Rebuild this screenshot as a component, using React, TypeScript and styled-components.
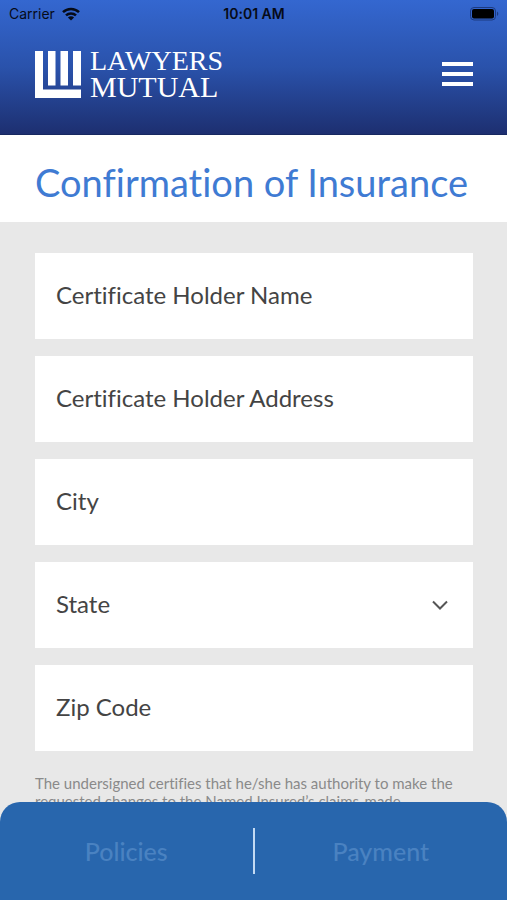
import React from "react";
import styled, { createGlobalStyle } from "styled-components";

const GlobalStyle = createGlobalStyle`
  *, *::before, *::after { box-sizing: border-box; }
  body {
    margin: 0;
    font-family: Lato, "Open Sans", sans-serif;
    font-variant-ligatures: none;
  }
`;

const Screen = styled.div`
  display: flex;
  flex-direction: column;
  height: 100vh;
  overflow: hidden;
  background: #e8e8e8;
`;

const Header = styled.header`
  flex: none;
  background: linear-gradient(#3467d0, #2a52ab 50%, #1d2f70);
  border-bottom: 1px solid #172860;
`;

const StatusBar = styled.div`
  display: grid;
  grid-template-columns: 1fr auto 1fr;
  align-items: center;
  height: 27px;
  padding: 0 8px 0 9px;
  color: #060b18;
  font-family: Inter, sans-serif;
  font-size: 14px;
`;

const Carrier = styled.div`
  display: flex;
  align-items: center;
  gap: 7px;
`;

const Clock = styled.time`
  font-weight: 600;
`;

const Battery = styled.svg`
  justify-self: end;
`;

const Bar = styled.div`
  display: flex;
  align-items: center;
  justify-content: space-between;
  padding: 21px 34px 34px 35px;
`;

const Brand = styled.a`
  display: flex;
  align-items: center;
  gap: 9px;
  color: #fff;
  text-decoration: none;
`;

const BrandName = styled.span`
  display: flex;
  flex-direction: column;
  font-family: "Liberation Serif", serif;
  line-height: 26px;
`;

const BrandWord = styled.span<{ $size: number }>`
  font-size: ${(p) => p.$size}px;
`;

const MenuButton = styled.button`
  display: flex;
  padding: 0;
  border: 0;
  background: none;
  color: #fff;
  cursor: pointer;
`;

const TitleBand = styled.div`
  flex: none;
  padding: 23px 35px 16px;
  background: #fff;
`;

const Title = styled.h1`
  margin: 0;
  color: #3f7bd3;
  font-size: 38px;
  font-weight: 400;
  line-height: 48px;
  white-space: nowrap;
`;

const Content = styled.main`
  flex: 1;
  min-height: 0;
  overflow-y: auto;
  scrollbar-width: none;
  padding: 31px 34px 98px 35px;
`;

const Form = styled.form`
  display: flex;
  flex-direction: column;
  gap: 17px;
`;

const fieldStyle = `
  display: block;
  width: 100%;
  height: 86px;
  margin: 0;
  padding: 0 21px 4px;
  border: 0;
  border-radius: 0;
  background: #fff;
  color: #444;
  font: 400 24px Lato, "Open Sans", sans-serif;
  font-variant-ligatures: none;
  appearance: none;
`;

const TextField = styled.input`
  ${fieldStyle}
  &::placeholder { color: #444; opacity: 1; }
`;

const SelectWrap = styled.div`
  display: grid;
  align-items: center;
  & > * { grid-area: 1 / 1; }
`;

const SelectField = styled.select`
  ${fieldStyle}
`;

const Chevron = styled.svg`
  justify-self: end;
  margin-right: 25px;
  pointer-events: none;
`;

const Terms = styled.p`
  margin: 23px 0 0;
  color: #8a8a8a;
  font-size: 15px;
  line-height: 18px;
`;

const BottomNav = styled.nav`
  position: fixed;
  left: 0;
  right: 0;
  bottom: 0;
  display: grid;
  grid-template-columns: 1fr 2px 1fr;
  align-items: center;
  height: 98px;
  border-radius: 20px 20px 0 0;
  background: #2866ad;
`;

const NavLink = styled.a`
  color: #4a82c1;
  font-size: 25px;
  font-weight: 500;
  line-height: 32px;
  text-align: center;
  text-decoration: none;
`;

const NavDivider = styled.span`
  height: 46px;
  background: #c3daf3;
`;

function WifiIcon() {
  return (
    <svg width="18" height="14" viewBox="0 0 18 14" fill="none" stroke="currentColor" strokeWidth="2.5" aria-hidden="true">
      <path d="M1 5.2a11.4 11.4 0 0 1 16 0" />
      <path d="M4 8.4a7.2 7.2 0 0 1 10 0" />
      <path d="M9 13.6 5.9 10.5a4.4 4.4 0 0 1 6.2 0z" fill="currentColor" stroke="none" />
    </svg>
  );
}

function BatteryIcon() {
  return (
    <Battery width="29" height="14" viewBox="0 0 29 14" aria-label="Battery full" role="img">
      <rect x="0.5" y="0.5" width="25" height="12.5" rx="3.5" fill="none" stroke="#1c3a80" />
      <rect x="2" y="2" width="22" height="9.5" rx="2" fill="#000" />
      <path d="M27 4.5c1.8.8 1.8 3.7 0 4.5z" fill="#1c3a80" />
    </Battery>
  );
}

function LogoMark() {
  return (
    <svg width="46" height="47" viewBox="0 0 46 47" fill="#fff" aria-hidden="true">
      <path d="M0 0h8v38.5h38V47H0z" />
      <path d="M13 0h7.500v34.500H13zM25.500 0h7.500v34.500h-7.500zM38 0h8v34.500h-8z" />
    </svg>
  );
}

export default function App() {
  return (
    <Screen>
      <GlobalStyle />
      <Header>
        <StatusBar>
          <Carrier>
            Carrier
            <WifiIcon />
          </Carrier>
          <Clock>10:01 AM</Clock>
          <BatteryIcon />
        </StatusBar>
        <Bar>
          <Brand href="#home">
            <LogoMark />
            <BrandName>
              <BrandWord $size={28}>LAWYERS</BrandWord>
              <BrandWord $size={30}>MUTUAL</BrandWord>
            </BrandName>
          </Brand>
          <MenuButton type="button" aria-label="Menu">
            <svg width="31" height="24" viewBox="0 0 31 24" fill="currentColor" aria-hidden="true">
              <path d="M0 0h31v4H0zM0 10h31v4H0zM0 20h31v4H0z" />
            </svg>
          </MenuButton>
        </Bar>
      </Header>
      <TitleBand>
        <Title>Confirmation of Insurance</Title>
      </TitleBand>
      <Content>
        <Form>
          <TextField type="text" placeholder="Certificate Holder Name" aria-label="Certificate Holder Name" />
          <TextField type="text" placeholder="Certificate Holder Address" aria-label="Certificate Holder Address" />
          <TextField type="text" placeholder="City" aria-label="City" />
          <SelectWrap>
            <SelectField aria-label="State" defaultValue="">
              <option value="">State</option>
            </SelectField>
            <Chevron width="16" height="10" viewBox="0 0 16 10" fill="none" stroke="#555" strokeWidth="2" aria-hidden="true">
              <path d="M1 1.5 8 8.5l7-7" />
            </Chevron>
          </SelectWrap>
          <TextField type="text" inputMode="numeric" placeholder="Zip Code" aria-label="Zip Code" />
        </Form>
        <Terms>
          The undersigned certifies that he/she has authority to make the requested changes to the Named
          Insured’s claims-made
        </Terms>
      </Content>
      <BottomNav>
        <NavLink href="#policies">Policies</NavLink>
        <NavDivider />
        <NavLink href="#payment">Payment</NavLink>
      </BottomNav>
    </Screen>
  );
}
